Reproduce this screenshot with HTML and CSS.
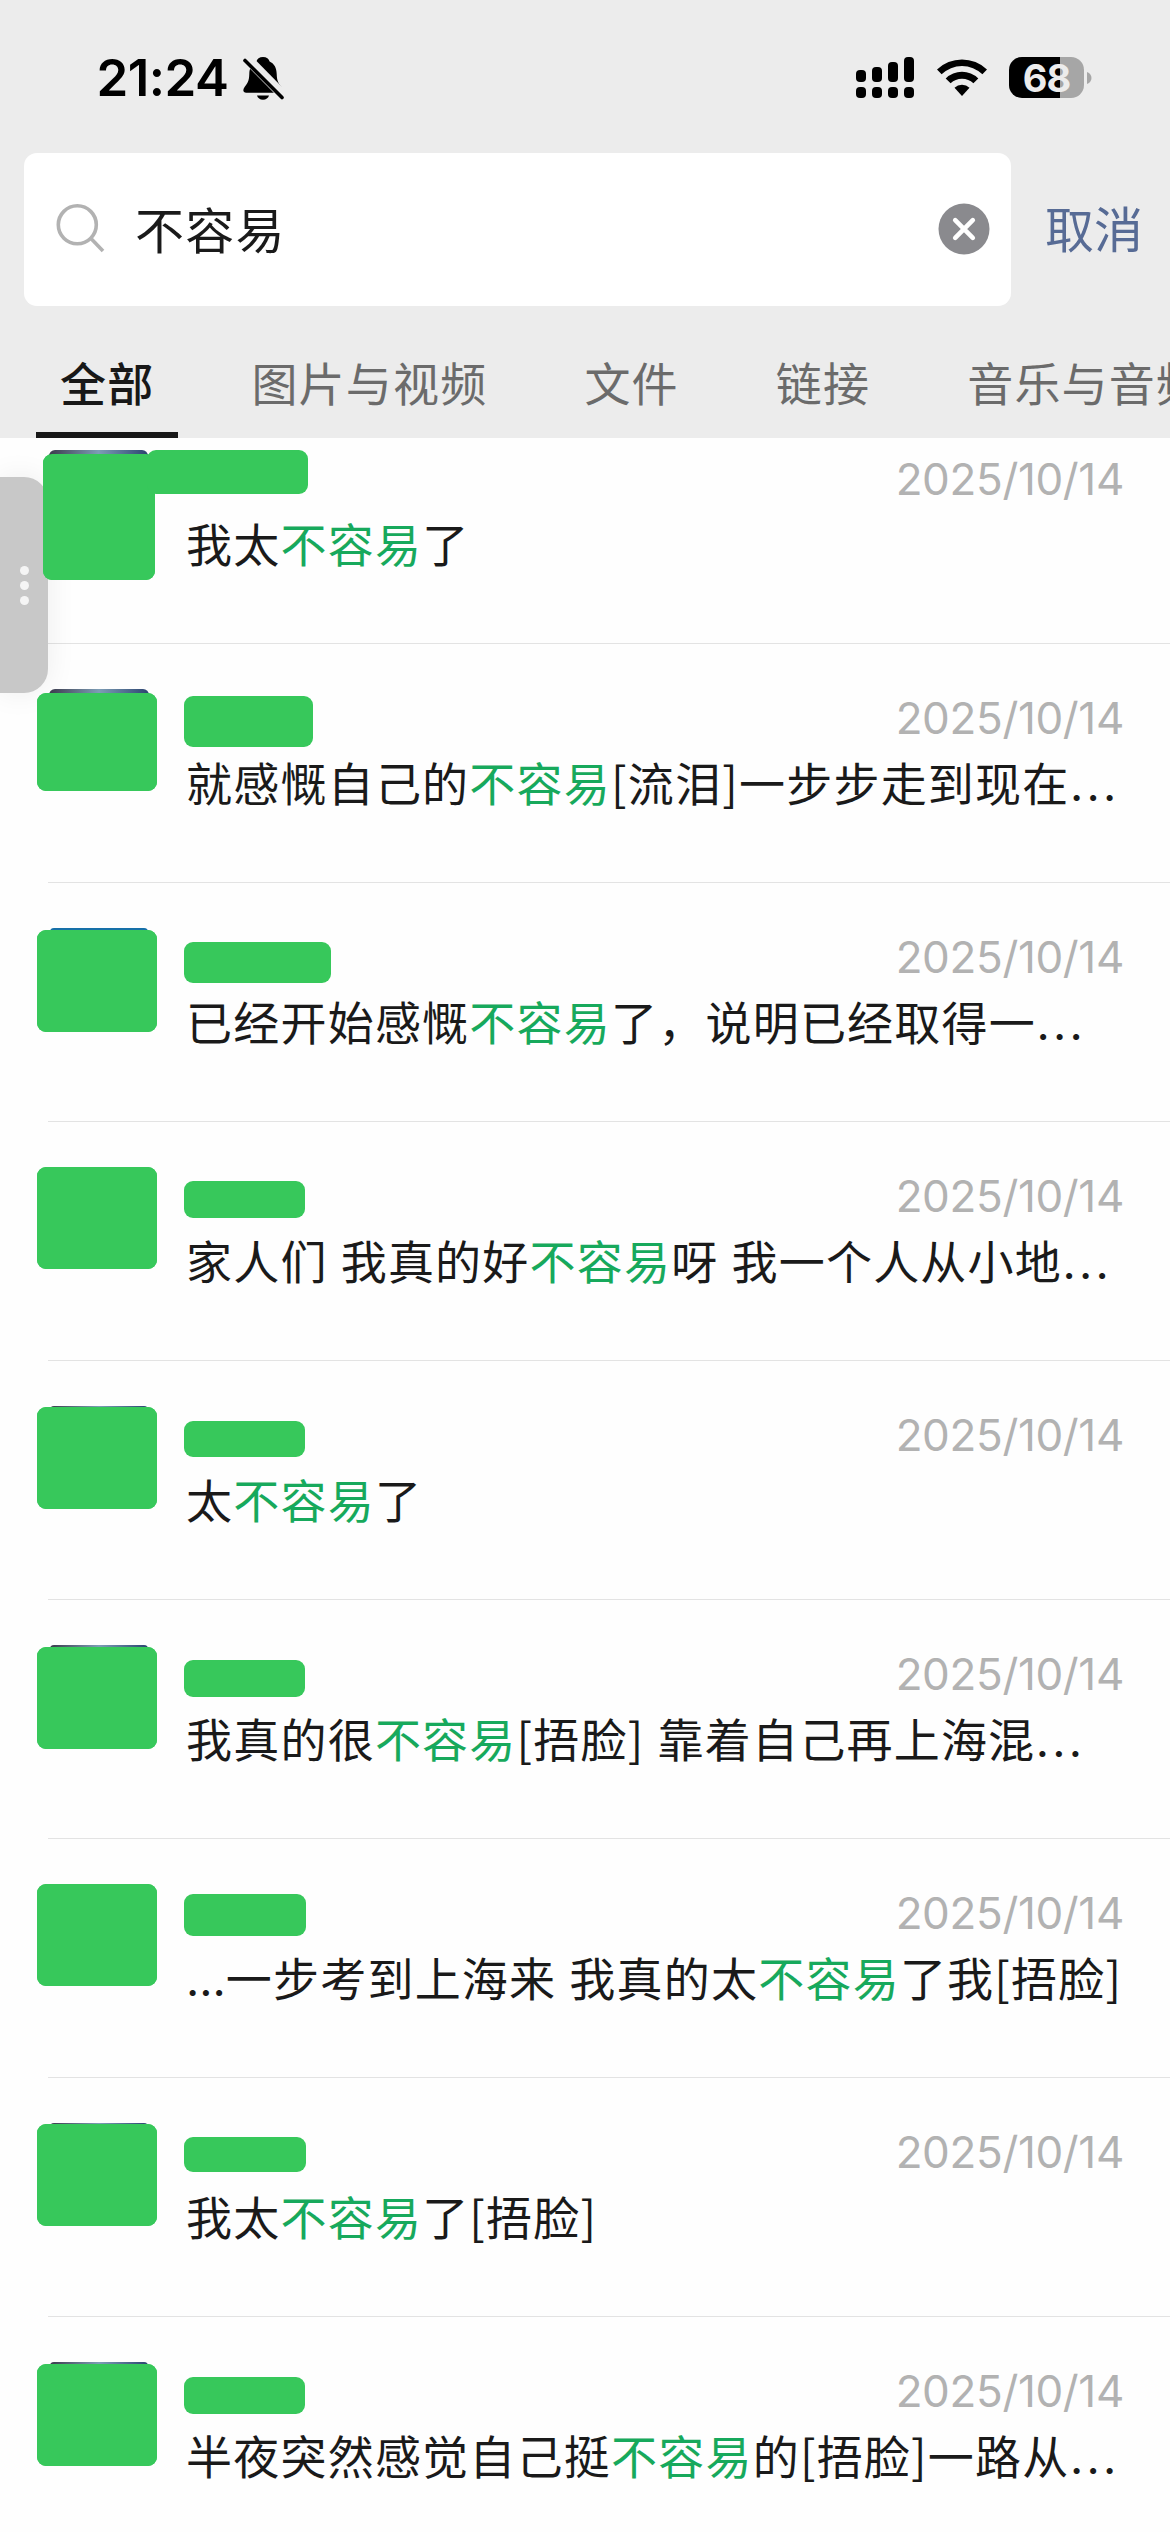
FILE: index.html
```html
<!DOCTYPE html>
<html lang="zh-CN">
<head>
<meta charset="utf-8">
<title>搜索</title>
<link rel="stylesheet" href="styles.css">
</head>
<body>
<header class="top">
  <div class="status">
    <span class="time">21:24</span>
    <svg class="bell" width="42" height="46" viewBox="0 0 42 46">
      <path d="M21 3c-3.600 0-6 2-6.600 4.600C9.500 10 7.500 14 7.300 20c-.2 7.500-2 9.500-4.700 13-2.300 3-1.300 5.700 1.600 5.700h33.600c2.900 0 3.900-2.700 1.600-5.700-2.700-3.500-4.500-5.500-4.700-13-.2-6-2.200-10-7.100-12.400C27 5 24.600 3 21 3zM15 41.500h12c-.6 2.500-3 4.200-6 4.200s-5.400-1.700-6-4.200z"/>
      <path class="bell-gap" d="M4 3.500 42 42"/>
      <path class="bell-slash" d="M3 6.500 40 43.500"/>
    </svg>
    <svg class="signal" width="58" height="41" viewBox="0 0 58 41">
      <rect x="0" y="13" width="10" height="12" rx="4"/><rect x="16" y="10" width="10" height="15" rx="4"/><rect x="32" y="5" width="10" height="20" rx="4"/><rect x="48" y="0" width="10" height="25" rx="4"/>
      <rect x="0" y="30" width="10" height="11" rx="4"/><rect x="16" y="30" width="10" height="11" rx="4"/><rect x="32" y="30" width="10" height="11" rx="4"/><rect x="48" y="30" width="10" height="11" rx="4"/>
    </svg>
    <svg class="wifi" width="50" height="37" viewBox="0 0 50 37">
      <path d="M0 10.500a36 36 0 0 1 50 0l-4.600 4.800a29.300 29.300 0 0 0-40.800 0z"/>
      <path d="M8.700 19.400a23.500 23.500 0 0 1 32.600 0l-4.900 4.900a16.500 16.500 0 0 0-22.800 0z"/>
      <path d="M17.500 28.700a11 11 0 0 1 15 0L25 37z"/>
    </svg>
    <div class="battery"><span class="level">68</span></div>
    <svg class="nub" width="5" height="12" viewBox="0 0 5 12"><path d="M0 0c3 1 4.500 3.500 4.500 6S3 11 0 12z"/></svg>
  </div>
  <div class="searchbar">
    <div class="field">
      <svg class="lens" width="52" height="52" viewBox="0 0 52 52"><circle cx="21.300" cy="20.800" r="19"/><path d="M34.500 34 47 47"/></svg>
      <span class="query">不容易</span>
      <svg class="clear" width="52" height="52" viewBox="0 0 52 52"><circle cx="26" cy="26" r="25.500"/><path d="M17.200 17.200 34.800 34.800M34.800 17.200 17.200 34.800"/></svg>
    </div>
    <span class="cancel">取消</span>
  </div>
  <nav class="tabs">
    <span class="tab active">全部</span>
    <span class="tab">图片与视频</span>
    <span class="tab">文件</span>
    <span class="tab">链接</span>
    <span class="tab">音乐与音频</span>
  </nav>
</header>
<main class="list">
  <article class="row r1">
    <div class="avatar"></div>
    <div class="info"><div class="head"><span class="name"></span><time>2025/10/14</time></div>
    <p>我太<em>不容易</em>了</p></div>
  </article>
  <article class="row r2">
    <div class="avatar"></div>
    <div class="info"><div class="head"><span class="name"></span><time>2025/10/14</time></div>
    <p>就感慨自己的<em>不容易</em>[流泪]一步步走到现在<i>...</i></p></div>
  </article>
  <article class="row r3">
    <div class="avatar"></div>
    <div class="info"><div class="head"><span class="name"></span><time>2025/10/14</time></div>
    <p>已经开始感慨<em>不容易</em>了，说明已经取得一<i>...</i></p></div>
  </article>
  <article class="row r4">
    <div class="avatar"></div>
    <div class="info"><div class="head"><span class="name"></span><time>2025/10/14</time></div>
    <p>家人们 我真的好<em>不容易</em>呀 我一个人从小地<i>...</i></p></div>
  </article>
  <article class="row r5">
    <div class="avatar"></div>
    <div class="info"><div class="head"><span class="name"></span><time>2025/10/14</time></div>
    <p>太<em>不容易</em>了</p></div>
  </article>
  <article class="row r6">
    <div class="avatar"></div>
    <div class="info"><div class="head"><span class="name"></span><time>2025/10/14</time></div>
    <p>我真的很<em>不容易</em>[捂脸] 靠着自己再上海混<i>...</i></p></div>
  </article>
  <article class="row r7">
    <div class="avatar"></div>
    <div class="info"><div class="head"><span class="name"></span><time>2025/10/14</time></div>
    <p><i class="lead">...</i>一步考到上海来 我真的太<em>不容易</em>了我[捂脸]</p></div>
  </article>
  <article class="row r8">
    <div class="avatar"></div>
    <div class="info"><div class="head"><span class="name"></span><time>2025/10/14</time></div>
    <p>我太<em>不容易</em>了[捂脸]</p></div>
  </article>
  <article class="row r9">
    <div class="avatar"></div>
    <div class="info"><div class="head"><span class="name"></span><time>2025/10/14</time></div>
    <p>半夜突然感觉自己挺<em>不容易</em>的[捂脸]一路从<i>...</i></p></div>
  </article>
</main>
<aside class="handle"><b></b><b></b><b></b></aside>
</body>
</html>
```
FILE: styles.css
```css
* { box-sizing: border-box; }
body {
  margin: 0;
  width: 1170px;
  height: 2532px;
  overflow: hidden;
  position: relative;
  background: #fefefe;
  color: #1a1a1a;
  font-family: "Noto Sans CJK SC", sans-serif;
}
svg { display: block; flex: none; }

.top { position: relative; z-index: 4; height: 438px; background: #ececec; overflow: hidden; }

.status { display: flex; height: 153px; padding-left: 96.5px; }
.time { width: 145.5px; margin-top: 47px; font: 600 51px/62px Inter, sans-serif; letter-spacing: -0.5px; color: #000; }
.bell { margin-top: 54px; }
.bell-gap { stroke: #ececec; stroke-width: 10; }
.bell-slash { stroke: #000; stroke-width: 3.6; stroke-linecap: round; }
.signal { margin: 57px 0 0 572px; }
.wifi { margin: 59px 0 0 22.5px; }
.battery {
  width: 75px; height: 41px; margin: 57px 0 0 22.5px;
  border-radius: 13px;
  background: linear-gradient(90deg, #000 51px, #a6a6a6 51px);
  text-align: center;
}
.level { font: 700 38px/42px Inter, sans-serif; letter-spacing: -1px; color: #ececec; }
.nub { margin: 72px 0 0 3px; fill: #a6a6a6; }

.searchbar { display: flex; align-items: center; padding-left: 24px; height: 153px; }
.field {
  display: flex; align-items: center;
  width: 987px; height: 153px; padding: 0 21px 0 32px;
  border-radius: 13px; background: #fff;
}
.lens { fill: none; stroke: #b2b2b2; stroke-width: 3.6; }
.query { flex: 1; margin: 0 0 4px 27px; font-size: 49px; letter-spacing: 1.300px; line-height: 70px; }
.clear { margin-bottom: 2px; }
.clear circle { fill: #8a8a8e; }
.clear path { stroke: #fff; stroke-width: 4.6; stroke-linecap: round; }
.cancel { margin: 0 0 5px 34px; font-size: 49px; line-height: 70px; color: #576b95; white-space: nowrap; }

.tabs { display: flex; gap: 49px; height: 132px; padding-left: 36px; white-space: nowrap; }
.tab { flex: none; height: 132px; padding: 0 24px; font-size: 46px; letter-spacing: 1.200px; line-height: 151px; color: #6b6b6b; }
.tab.active { color: #181818; font-weight: 500; border-bottom: 6px solid #181818; }

.list { margin-top: -34px; }
.row {
  display: flex; height: 239px; padding-left: 37px;
  background: linear-gradient(#e3e3e3, #e3e3e3) 48px 0 / 100% 1px no-repeat;
}
.avatar {
  position: relative; z-index: 3; flex: none;
  width: 120px; height: 102px; margin-top: 47px;
  border-radius: 9px; background: #37c85b;
}
.avatar::before {
  content: ""; position: absolute; z-index: -1;
  left: 13px; top: -1px; width: 98px; height: 4px;
  border-radius: 6px 6px 0 0;
  background: linear-gradient(90deg, #3b3a4c, #7d9db5 50%, #2b4470);
}
.avatar::after { content: ""; position: absolute; inset: 0; border-radius: 9px; background: #37c85b; }
.info { flex: 1; margin: 0 47px 0 27px; white-space: nowrap; }
.head { display: flex; justify-content: space-between; align-items: flex-start; height: 109px; }
.name { position: relative; z-index: 3; width: 121px; height: 37px; margin-top: 60px; border-radius: 9px; background: #37c85b; }
time { margin: 50px -1px 0 0; font: 400 44px/50px Inter, sans-serif; letter-spacing: -0.35px; color: #b2b2b2; }
p { margin: -1px 0 0 2px; font-size: 46px; letter-spacing: 1.220px; word-spacing: 1.500px; line-height: 60px; }
em { font-style: normal; color: #17a95c; }
i { font: 400 46px/60px Inter, sans-serif; letter-spacing: 3.200px; margin-left: 0.5px; }
i.lead { letter-spacing: 0; margin-left: 0; }

.r1 { padding-left: 43px; background: none; }
.r1 .avatar { width: 112px; height: 126px; margin-top: 50px; }
.r1 .avatar::before { left: 6px; top: -4px; height: 8px; width: 99px; }
.r1 .info { margin-left: 29px; }
.r1 .name { width: 161px; height: 44px; margin: 46px 0 0 -37px; }
.r2 .avatar { height: 98px; margin-top: 50px; }
.r2 .avatar::before { top: -4px; height: 8px; left: 12px; width: 100px; }
.r2 .name { width: 129px; height: 51px; margin-top: 53px; }
.r3 .avatar { margin-top: 48px; }
.r3 .avatar::before { top: -2px; background: #1670a8; }
.r3 .name { width: 147px; height: 41px; }
.r4 .avatar, .r7 .avatar { margin-top: 46px; }
.r4 .avatar::before, .r7 .avatar::before { display: none; }
.r5 .name { margin-top: 61px; height: 36px; }
.r6 .avatar, .r9 .avatar { margin-top: 48px; }
.r6 .avatar::before, .r9 .avatar::before { top: -2px; }
.r6 .name, .r9 .name { margin-top: 61px; }
.r7 .name { margin-top: 56px; height: 42px; width: 122px; }
.r8 .name { height: 35px; width: 122px; }

.handle {
  position: absolute; z-index: 2; left: 0; top: 477px;
  display: flex; flex-direction: column; align-items: center; gap: 6px;
  width: 48px; height: 216px; padding-top: 89px;
  border-radius: 0 24px 24px 0; background: #c8c8c8;
  box-shadow: 0 0 30px rgba(0, 0, 0, .07);
}
.handle b { width: 9px; height: 9px; border-radius: 50%; background: #f5f5f5; }
```
